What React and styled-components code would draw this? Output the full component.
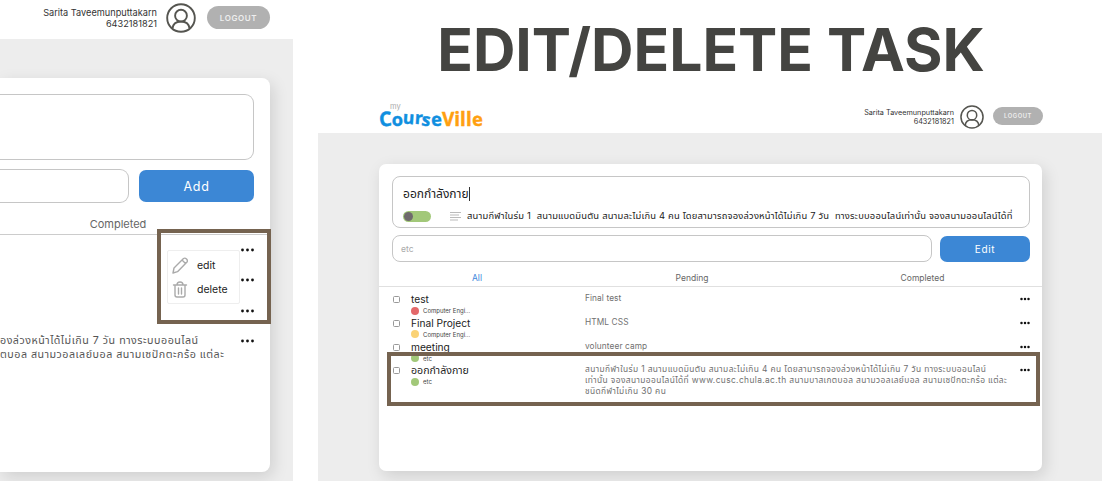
import React from "react";
import styled, { createGlobalStyle } from "styled-components";

const Global = createGlobalStyle`
  *, *::before, *::after { box-sizing: border-box; }
  html, body { margin: 0; padding: 0; background: #fff; }
  body { width: 1102px; height: 481px; overflow: hidden; font-family: Inter, "Noto Sans Thai", "Noto Sans", sans-serif; color: #222; }
`;

const Page = styled.div`
  display: flex;
  gap: 25px;
  width: 1102px;
  height: 481px;
  overflow: hidden;
`;

const Preview = styled.section`
  display: flex;
  flex-direction: column;
  width: 293px;
  height: 481px;
  overflow: hidden;
`;

const Slide = styled.section`
  display: flex;
  flex-direction: column;
  width: 784px;
  height: 481px;
`;

const Title = styled.h1`
  margin: 0;
  height: 98px;
  padding-left: 2px;
  text-align: center;
  white-space: nowrap;
  font-size: 58.8px;
  line-height: 100px;
  font-weight: 700;
  letter-spacing: 0;
  color: #444441;
`;

const TopBar = styled.header`
  display: flex;
  align-items: center;
  flex: none;
  height: ${(p) => p.$height}px;
  padding: ${(p) => p.$pad};
  background: #fff;
`;

const Logo = styled.div`
  position: relative;
  display: flex;
  align-items: baseline;
  margin-right: auto;
  padding-top: 7px;
  font-family: "Open Sans", sans-serif;
  line-height: 24px;
  font-weight: 700;
`;

const LogoLetter = styled.span`
  display: inline-block;
  color: ${(p) => (p.$gold ? "#ffa010" : "#108fe0")};
  font-size: ${(p) => p.$size}px;
  transform: translateY(${(p) => p.$dy}px) rotate(${(p) => p.$tilt}deg);
  -webkit-text-stroke: 0.4px currentColor;
`;

const LogoMy = styled.span`
  position: absolute;
  left: 11px;
  top: 3px;
  font-family: Inter, sans-serif;
  font-size: 7.5px;
  line-height: 8px;
  font-weight: 400;
  color: #aaa;
`;

const User = styled.div`
  margin-left: auto;
  padding-top: ${(p) => p.$drop || 0}px;
  text-align: right;
  white-space: nowrap;
  font-size: ${(p) => p.$size}px;
  line-height: ${(p) => p.$line}px;
  color: #333;
`;

const Avatar = styled.svg`
  flex: none;
  display: block;
  width: ${(p) => p.$size}px;
  height: ${(p) => p.$size}px;
  margin: ${(p) => p.$margin};
`;

const Logout = styled.button`
  flex: none;
  width: ${(p) => p.$w}px;
  height: ${(p) => p.$h}px;
  padding: 0;
  border: 0;
  border-radius: 20px;
  background: #b1b1b1;
  color: #eee;
  font-family: inherit;
  font-weight: 600;
  font-size: ${(p) => p.$size}px;
  letter-spacing: ${(p) => p.$track}px;
`;

const Backdrop = styled.main`
  flex: 1;
  min-height: 0;
  padding: ${(p) => p.$pad};
  background: #ededed;
  overflow: hidden;
`;

const Card = styled.div`
  position: relative;
  display: flex;
  flex-direction: column;
  height: ${(p) => p.$h}px;
  padding-top: ${(p) => p.$top}px;
  background: #fff;
  border-radius: ${(p) => (p.$open ? "0 8px 8px 0" : "7px")};
  box-shadow: 3px 5px 16px rgba(0, 0, 0, 0.13);
`;

const Field = styled.div`
  flex: none;
  height: ${(p) => p.$h}px;
  margin: ${(p) => p.$margin || 0};
  padding: ${(p) => p.$pad || 0};
  border: 1.5px solid #c6c6c6;
  border-left-width: ${(p) => (p.$open ? 0 : "1.5px")};
  border-radius: ${(p) => (p.$open ? "0 9px 9px 0" : "8px")};
  overflow: hidden;
`;

const TaskName = styled.div`
  display: flex;
  align-items: center;
  height: 20px;
  font-size: 12px;
  white-space: nowrap;
`;

const Caret = styled.span`
  width: 1px;
  height: 14px;
  background: #333;
`;

const Details = styled.div`
  display: flex;
  align-items: center;
  height: 16px;
  margin-top: 4px;
  font-size: 9.4px;
  letter-spacing: 0.19px;
  white-space: nowrap;
`;

const Toggle = styled.span`
  flex: none;
  display: flex;
  align-items: center;
  width: 28px;
  height: 11px;
  padding-left: 1px;
  border-radius: 6px;
  background: #a2c879;
`;

const Knob = styled.span`
  width: 9px;
  height: 9px;
  border-radius: 50%;
  background: #6f6a6c;
`;

const Lines = styled.svg`
  flex: none;
  width: 11px;
  height: 10px;
  margin: 0 6px 0 19px;
`;

const EntryRow = styled.div`
  flex: none;
  display: flex;
  align-items: center;
  gap: ${(p) => p.$gap}px;
  padding: ${(p) => p.$pad};
`;

const Input = styled(Field)`
  flex: 1;
  display: flex;
  align-items: center;
  font-size: 8.5px;
  color: #aaa;
`;

const Submit = styled.button`
  flex: none;
  width: ${(p) => p.$w}px;
  height: ${(p) => p.$h}px;
  padding: 0;
  border: 0;
  border-radius: 7px;
  background: #3c87d5;
  color: #fff;
  font-family: inherit;
  font-size: ${(p) => p.$size}px;
  letter-spacing: 0.7px;
`;

const Tabs = styled.nav`
  flex: none;
  display: grid;
  grid-template-columns: ${(p) => p.$cols};
  height: ${(p) => p.$h}px;
  line-height: ${(p) => p.$line}px;
  border-bottom: 1.5px solid ${(p) => p.$rule};
  text-align: center;
  font-size: ${(p) => p.$size}px;
`;

const Tab = styled.span`
  color: ${(p) => (p.$active ? "#4187dc" : "#666")};
`;

const TaskList = styled.div`
  padding-top: 4px;
`;

const Task = styled.div`
  display: grid;
  grid-template-columns: 18px 174px 1fr 10px;
  height: 23.8px;
  padding: 0 12px 0 14px;
`;

const Check = styled.span`
  width: 7px;
  height: 7px;
  margin-top: 5px;
  border: 1px solid #999;
  border-radius: 1.5px;
`;

const Name = styled.div`
  height: 15px;
  font-size: ${(p) => (p.$thai ? 10.6 : 10.2)}px;
  line-height: ${(p) => (p.$thai ? 18 : 17)}px;
  white-space: nowrap;
`;

const Subject = styled.div`
  display: flex;
  align-items: center;
  gap: 4px;
  height: 9px;
  font-size: 6px;
  white-space: nowrap;
  color: #444;
`;

const Dot = styled.span`
  width: 8px;
  height: 8px;
  border-radius: 50%;
  background: ${(p) => p.$color};
`;

const Note = styled.div`
  padding-top: 2px;
  font-size: ${(p) => (p.$thai ? 8.4 : 8.3)}px;
  letter-spacing: ${(p) => (p.$thai ? 0.38 : 0.1)}px;
  line-height: 10.7px;
  white-space: nowrap;
  color: #707070;
`;

const More = styled.svg`
  flex: none;
  display: block;
  width: ${(p) => p.$w}px;
  height: 4px;
  margin-top: ${(p) => p.$top}px;
`;

const ShortTask = styled.div`
  flex: none;
  display: flex;
  justify-content: flex-end;
  height: 30.4px;
  padding-right: 16px;
`;

const ShortNote = styled.div`
  margin-right: auto;
  padding-top: 8px;
  font-size: 10.7px;
  letter-spacing: 0.5px;
  line-height: 13.8px;
  white-space: nowrap;
  color: #555;
`;

const Frame = styled.div`
  position: absolute;
  left: ${(p) => p.$x}px;
  top: ${(p) => p.$y}px;
  width: ${(p) => p.$w}px;
  height: ${(p) => p.$h}px;
  border: 4px solid #756350;
`;

const Menu = styled.div`
  position: absolute;
  left: 167px;
  top: 172px;
  width: 73px;
  height: 54px;
  padding: 2px 0 0 4px;
  border: 1px solid #eee;
  border-radius: 2px;
  background: #fff;
`;

const MenuItem = styled.div`
  display: flex;
  align-items: center;
  gap: 9px;
  height: 24px;
  font-size: 10.5px;
  color: #222;
`;

const MenuIcon = styled.svg`
  width: 16px;
  height: 17px;
  fill: none;
  stroke: #aaa;
  stroke-width: 1.4;
  stroke-linejoin: round;
  stroke-linecap: round;
`;

const Person = ({ size, margin }) => (
  <Avatar $size={size} $margin={margin} viewBox="0 0 30 30" fill="none" stroke="#555550" strokeWidth="1.9">
    <circle cx="15" cy="15" r="13.8" />
    <circle cx="15" cy="12.7" r="5.9" />
    <path d="M6.500 25.500c.5-4.800 3.500-7 8.500-7s8 2.200 8.500 7" />
  </Avatar>
);

const Ellipsis = ({ w = 10, top = 6, r = 1.25 }) => (
  <More $w={w} $top={top} viewBox={`0 0 ${w} 4`} fill="#111">
    <circle cx="1.5" cy="2" r={r} />
    <circle cx={w / 2} cy="2" r={r} />
    <circle cx={w - 1.5} cy="2" r={r} />
  </More>
);

const letters = [
  ["C", 0, 20, -4],
  ["o", 0, 18.2, 0],
  ["u", -2, 17.5, 4],
  ["r", -2, 17.5, 4],
  ["s", 0, 17.5, 8],
  ["e", 0, 18.2, -4],
  ["V", 0, 19, 0, true],
  ["i", 0, 19, 0, true],
  ["l", 0, 19, 0, true],
  ["l", 0, 19, 0, true],
  ["e", 0, 18.2, -4, true],
];

const tasks = [
  { name: "test", subject: "Computer Engi...", color: "#e3686a", note: ["Final test"] },
  { name: "Final Project", subject: "Computer Engi...", color: "#fad275", note: ["HTML CSS"] },
  { name: "meeting", subject: "etc", color: "#a2c879", note: ["volunteer camp"] },
  {
    name: "ออกกำลังกาย",
    subject: "etc",
    color: "#a2c879",
    thai: true,
    note: [
      "สนามกีฬาในร่ม 1 สนามแบดมินตัน สนามละไม่เกิน 4 คน โดยสามารถจองล่วงหน้าได้ไม่เกิน 7 วัน ทางระบบออนไลน์",
      "เท่านั้น จองสนามออนไลน์ได้ที่ www.cusc.chula.ac.th สนามบาสเกตบอล สนามวอลเลย์บอล สนามเซปักตะกร้อ แต่ละ",
      "ชนิดกีฬาไม่เกิน 30 คน",
    ],
  },
];

export default function App() {
  return (
    <Page>
      <Global />
      <Preview>
        <TopBar $height={39} $pad="0 23px 4px 0">
          <User $size={9.2} $line={11}>
            Sarita Taveemunputtakarn
            <br />
            6432181821
          </User>
          <Person size={30} margin="0 11px 0 9px" />
          <Logout $w={63} $h={23} $size={8} $track={0.6}>LOGOUT</Logout>
        </TopBar>
        <Backdrop $pad="39px 23px 0 0">
          <Card $h={394} $top={16} $open>
            <Field $h={66} $margin="0 16px 0 0" $open />
            <EntryRow $gap={10} $pad="9px 16px 0 0">
              <Input $h={34} $open />
              <Submit $w={115} $h={32} $size={12.5}>Add</Submit>
            </EntryRow>
            <Tabs $cols="88px 60px" $h={32} $line={42} $rule="#ccc" $size={11}>
              <span />
              <Tab>Completed</Tab>
            </Tabs>
            {[0, 1, 2].map((i) => (
              <ShortTask key={i}>
                <Ellipsis w={13} top={13} r={1.4} />
              </ShortTask>
            ))}
            <ShortTask>
              <ShortNote>
                องล่วงหน้าได้ไม่เกิน 7 วัน ทางระบบออนไลน์
                <br />
                ตบอล สนามวอลเลย์บอล สนามเซปักตะกร้อ แต่ละ
              </ShortNote>
              <Ellipsis w={13} top={13} r={1.4} />
            </ShortTask>
            <Frame $x={157} $y={151} $w={114} $h={95} />
            <Menu>
              <MenuItem>
                <MenuIcon viewBox="0 0 16 17">
                  <path d="M1 16l1-5L11.500 1.500Q13 .5 14.500 2T15 5L5.500 14.700zM10 3l3.500 3.500" />
                </MenuIcon>
                edit
              </MenuItem>
              <MenuItem>
                <MenuIcon viewBox="0 0 16 17">
                  <path d="M1.500 4h13M5 4q0-3 3-3t3 3M3 4v10q0 2 2 2h6q2 0 2-2V4M6.500 7v6M9.500 7v6" />
                </MenuIcon>
                delete
              </MenuItem>
            </Menu>
          </Card>
        </Backdrop>
      </Preview>

      <Slide>
        <Title>EDIT/DELETE TASK</Title>
        <TopBar $height={35} $pad="0 59px 0 61px">
          <Logo>
            <LogoMy>my</LogoMy>
            {letters.map(([c, dy, size, tilt, gold], i) => (
              <LogoLetter key={i} $dy={dy} $size={size} $tilt={tilt} $gold={gold}>{c}</LogoLetter>
            ))}
          </Logo>
          <User $size={7.25} $line={8.3} $drop={4}>
            Sarita Taveemunputtakarn
            <br />
            6432181821
          </User>
          <Person size={24} margin="2px 9px 0 6px" />
          <Logout $w={50} $h={18} $size={5.8} $track={0.6}>LOGOUT</Logout>
        </TopBar>
        <Backdrop $pad="31px 60px 0 61px">
          <Card $h={307} $top={12}>
            <Field $h={52} $margin="0 12px 0 13px" $pad="7px 0 0 10px">
              <TaskName>
                ออกกำลังกาย
                <Caret />
              </TaskName>
              <Details>
                <Toggle>
                  <Knob />
                </Toggle>
                <Lines viewBox="0 0 11 10" stroke="#bbb" strokeWidth="1">
                  <path d="M0 1.500h11M0 4h9M0 6.500h11M0 9h8" />
                </Lines>
                สนามกีฬาในร่ม 1&nbsp; สนามแบดมินตัน สนามละไม่เกิน 4 คน โดยสามารถจองล่วงหน้าได้ไม่เกิน 7 วัน&nbsp; ทางระบบออนไลน์เท่านั้น จองสนามออนไลน์ได้ที่
              </Details>
            </Field>
            <EntryRow $gap={8} $pad="7px 12px 0 13px">
              <Input $h={27} $pad="0 0 0 8px">etc</Input>
              <Submit $w={90} $h={26} $size={10}>Edit</Submit>
            </EntryRow>
            <Tabs $cols="196px 234px 227px" $h={25} $line={32} $rule="#e0e0e0" $size={8.5}>
              <Tab $active>All</Tab>
              <Tab>Pending</Tab>
              <Tab>Completed</Tab>
            </Tabs>
            <TaskList>
              {tasks.map((t) => (
                <Task key={t.name}>
                  <Check />
                  <div>
                    <Name $thai={t.thai}>{t.name}</Name>
                    <Subject>
                      <Dot $color={t.color} />
                      {t.subject}
                    </Subject>
                  </div>
                  <Note $thai={t.thai}>
                    {t.note.map((line) => (
                      <div key={line}>{line}</div>
                    ))}
                  </Note>
                  <Ellipsis />
                </Task>
              ))}
            </TaskList>
            <Frame $x={8} $y={188} $w={653} $h={54} />
          </Card>
        </Backdrop>
      </Slide>
    </Page>
  );
}
